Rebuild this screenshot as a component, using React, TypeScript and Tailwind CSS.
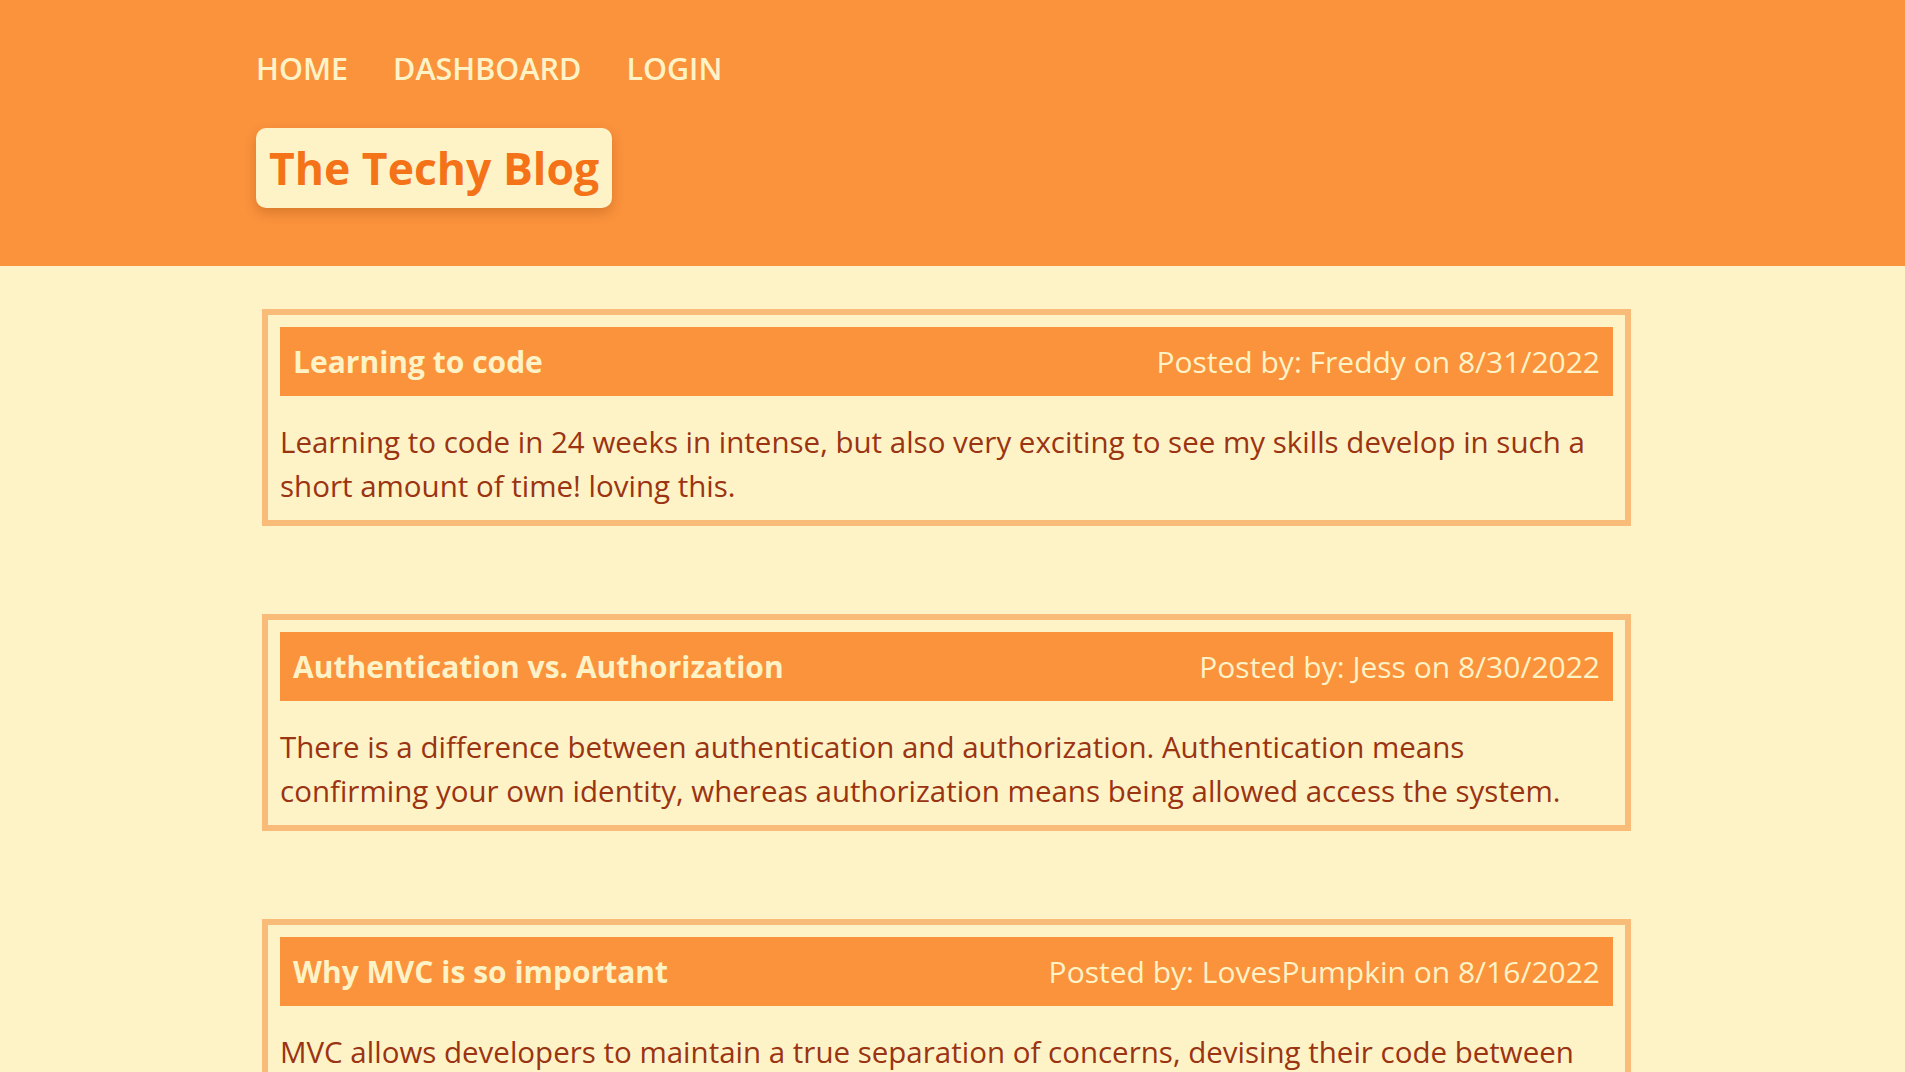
const posts = [
  {
    title: "Learning to code",
    author: "Freddy",
    date: "8/31/2022",
    body: "Learning to code in 24 weeks in intense, but also very exciting to see my skills develop in such a short amount of time! loving this.",
  },
  {
    title: "Authentication vs. Authorization",
    author: "Jess",
    date: "8/30/2022",
    body: "There is a difference between authentication and authorization. Authentication means confirming your own identity, whereas authorization means being allowed access the system.",
  },
  {
    title: "Why MVC is so important",
    author: "LovesPumpkin",
    date: "8/16/2022",
    body: "MVC allows developers to maintain a true separation of concerns, devising their code between the Model layer for data, the View layer for design, and the Controller layer for application logic.",
  },
];

function Header() {
  return (
    <header className="bg-[#fb923c] pl-[256px] pt-[48px] pb-[58px]">
      <nav className="flex gap-[45px] text-[30.5px] leading-[40px] font-semibold text-[#fef3c7]">
        <a href="#">HOME</a>
        <a href="#">DASHBOARD</a>
        <a href="#">LOGIN</a>
      </nav>
      <div className="mt-[40px] inline-block rounded-[10px] bg-[#fef3c7] px-[13px] py-[13px] shadow-[0_5px_12px_rgba(120,50,0,0.25)]">
        <h1 className="text-[44.5px] font-bold leading-[54px] text-[#f47318]">The Techy Blog</h1>
      </div>
    </header>
  );
}

function PostCard({ post }: { post: (typeof posts)[number] }) {
  return (
    <article className="border-[6px] border-[#f8bb78] p-[12px]">
      <div className="flex h-[69px] items-center justify-between bg-[#fb923c] px-[13px] text-[30px] text-[#fef3c7]">
        <h2 className="font-bold">{post.title}</h2>
        <span>
          Posted by: {post.author} on {post.date}
        </span>
      </div>
      <p className="mt-[24px] pr-[20px] text-[29.5px] leading-[44px] text-[#9a3412]">{post.body}</p>
    </article>
  );
}

export default function App() {
  return (
    <div className="min-h-screen bg-[#fef3c7] font-['Open_Sans',sans-serif]">
      <Header />
      <main className="flex flex-col gap-[88px] pt-[43px] pb-[60px] pl-[262px] pr-[274px]">
        {posts.map((post) => (
          <PostCard key={post.title} post={post} />
        ))}
      </main>
    </div>
  );
}
